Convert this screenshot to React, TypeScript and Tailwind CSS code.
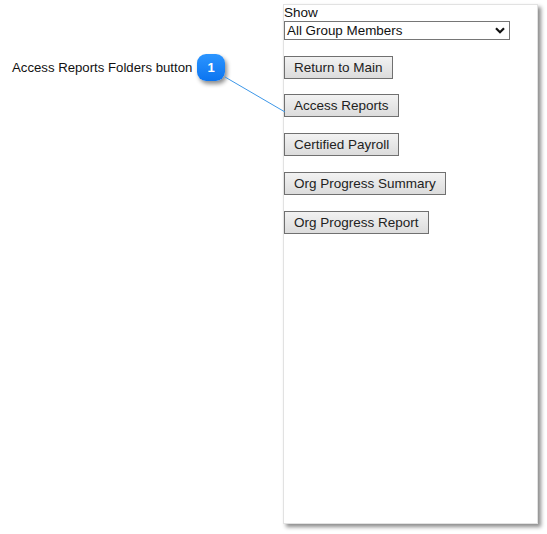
import React from 'react';

const buttons = [
  { label: 'Return to Main', mt: 'mt-[16px]' },
  { label: 'Access Reports', mt: 'mt-[15px]' },
  { label: 'Certified Payroll', mt: 'mt-[16px]' },
  { label: 'Org Progress Summary', mt: 'mt-[16px]' },
  { label: 'Org Progress Report', mt: 'mt-[16px]' },
];

function GreyButton({ label, mt }: { label: string; mt: string }) {
  return (
    <button
      className={`${mt} h-[23px] px-[9px] border border-[#707070] bg-gradient-to-b from-[#f2f2f2] to-[#dcdcdc] text-[13.5px] leading-none text-[#222] whitespace-nowrap`}
    >
      {label}
    </button>
  );
}

export default function App() {
  return (
    <div
      className="relative w-[547px] h-[534px] bg-white overflow-hidden flex"
      style={{ fontFamily: '"Liberation Sans", Arial, sans-serif' }}
    >
      {/* Callout label */}
      <div className="w-[283px] shrink-0 pt-[54px] pl-[12px]">
        <div className="flex items-center">
          <span className="w-[185px] text-[13.2px] leading-[16px] text-[#111] whitespace-nowrap">
            Access Reports Folders button
          </span>
          <div className="w-[28px] h-[27px] rounded-[9px] bg-gradient-to-b from-[#2b95ff] to-[#0a74f0] shadow-[2px_3px_4px_rgba(0,0,0,0.45)] flex items-center justify-center">
            <span className="text-white text-[13px] font-bold leading-none">1</span>
          </div>
        </div>
      </div>

      {/* Screen panel */}
      <div className="mt-[4px] w-[255px] h-[520px] bg-white border border-[#e2e2e2] shadow-[3px_3px_4px_rgba(0,0,0,0.45)] flex flex-col items-start">
        <div className="text-[13.5px] leading-[16px] text-[#111]">Show</div>
        <div className="w-[226px] h-[19px] border border-[#767676] flex items-center justify-between pl-[2px] pr-[4px]">
          <span className="text-[13.4px] leading-none text-[#111]">All Group Members</span>
          <svg width="10" height="7" viewBox="0 0 10 7">
            <path d="M1 1.2l4 4 4-4" fill="none" stroke="#111" strokeWidth="2.2" />
          </svg>
        </div>
        {buttons.map((b) => (
          <GreyButton key={b.label} label={b.label} mt={b.mt} />
        ))}
      </div>

      {/* Connector line */}
      <svg className="absolute inset-0 pointer-events-none" width="547" height="534">
        <line x1="225" y1="77" x2="285" y2="112" stroke="#3d97e8" strokeWidth="1" />
      </svg>
    </div>
  );
}
